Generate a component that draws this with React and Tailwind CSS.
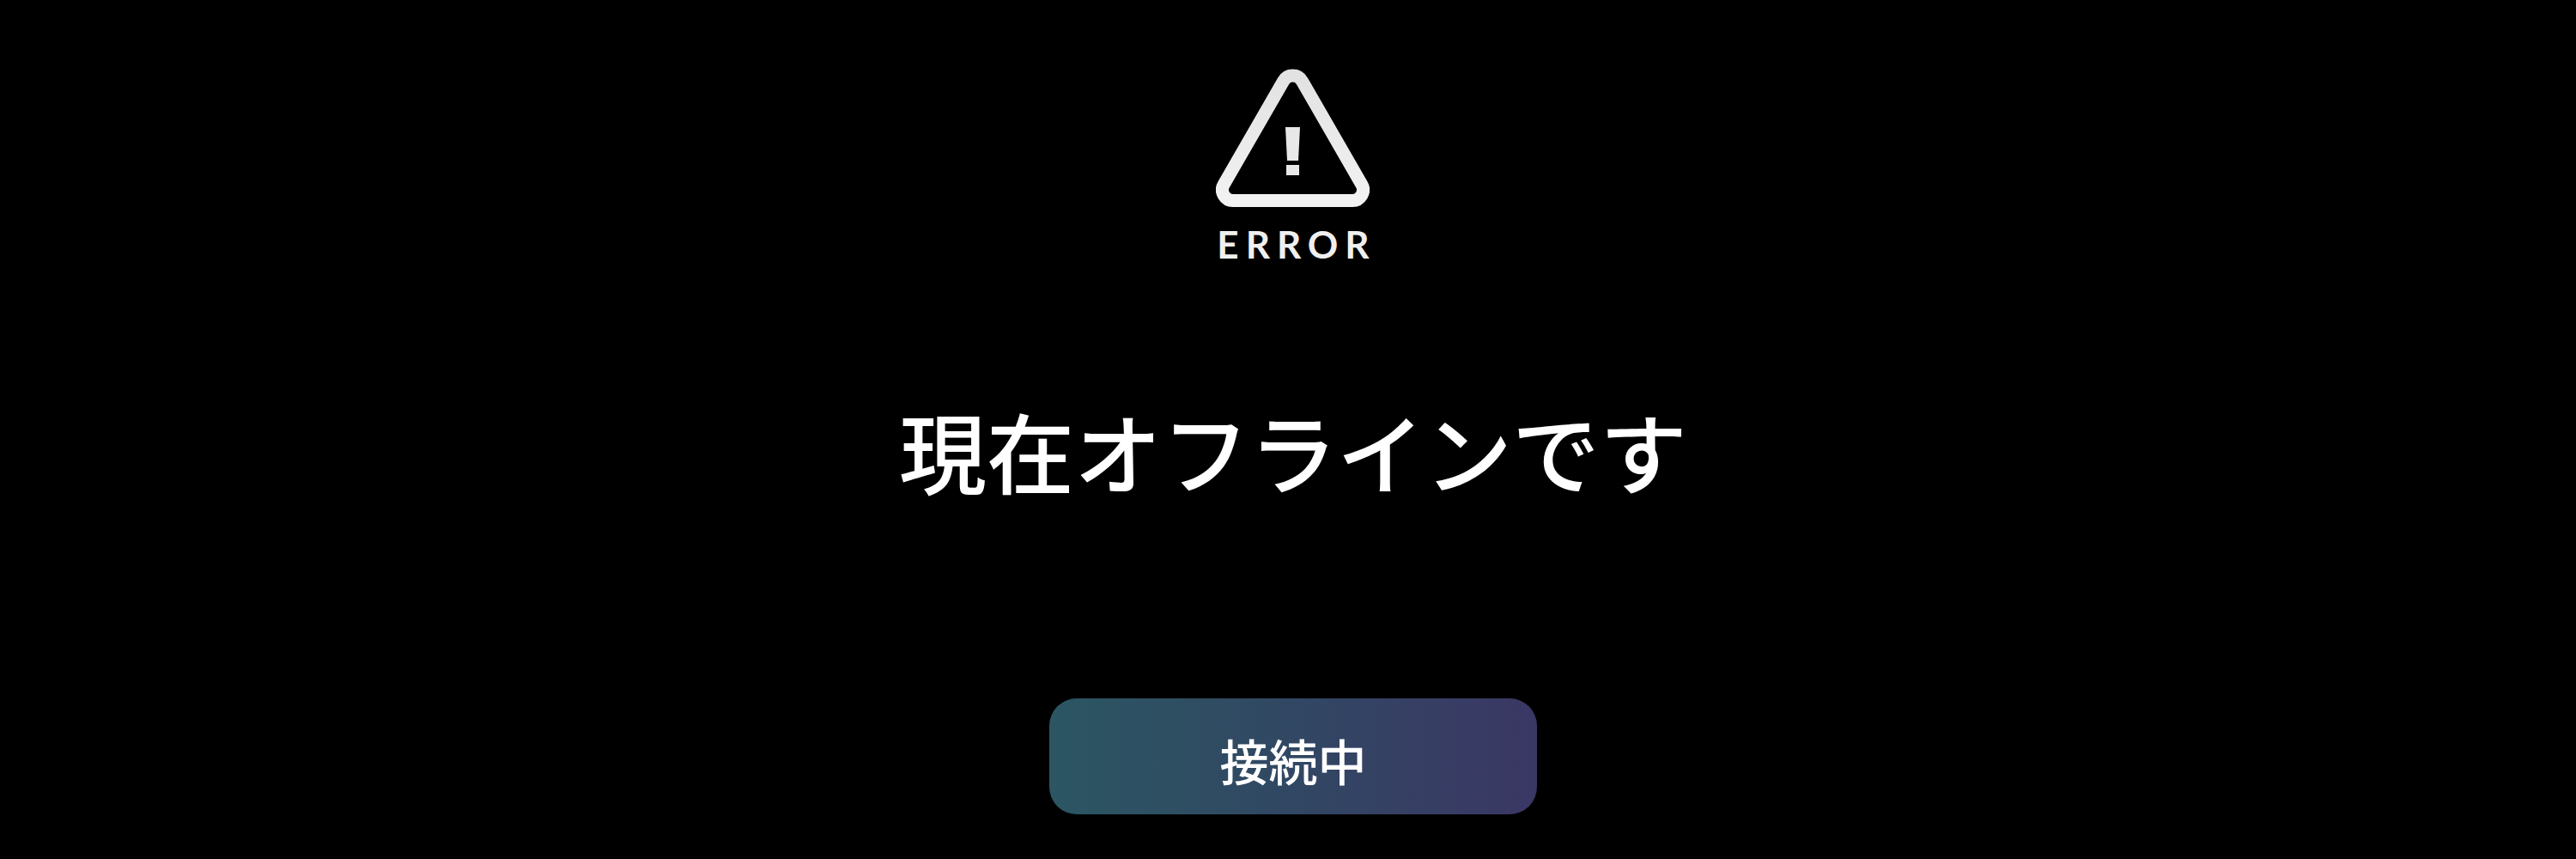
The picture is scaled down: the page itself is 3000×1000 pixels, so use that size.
const WarningIcon = () => (
  <svg
    viewBox="0 0 179 162"
    className="h-[162px] w-[179px]"
    fill="none"
    aria-hidden="true"
  >
    <defs>
      <linearGradient id="warning-shade" x1="0" y1="0" x2="0" y2="1">
        <stop offset="0" stopColor="#e2e2e2" />
        <stop offset="1" stopColor="#f2f2f2" />
      </linearGradient>
    </defs>
    <path
      d="M9.200 134.700 L78.700 14.200 A12.500 12.500 0 0 1 100.300 14.200 L169.800 134.700 A12.500 12.500 0 0 1 159 153.500 H20 A12.500 12.500 0 0 1 9.200 134.700 Z"
      stroke="url(#warning-shade)"
      strokeWidth="15"
    />
    <path d="M81 68h17l-2 39H83z" fill="#e8e8e8" />
    <path d="M82 112h15v12H82z" fill="#e8e8e8" />
  </svg>
);

const OfflineScreen = () => {
  return (
    <main className="flex min-h-screen flex-col items-center bg-black pt-20 pb-[52px] pl-3 font-['Noto_Sans_CJK_JP',sans-serif] text-white">
      {/* Error mark */}
      <div className="flex flex-col items-center">
        <WarningIcon />
        <p className="mt-[18px] pl-2 font-['Lato',sans-serif] text-[44px] leading-[48px] font-bold tracking-[8px] text-[#efefef]">
          ERROR
        </p>
      </div>

      <h1 className="mt-[140px] text-[102px] leading-[152px] font-medium">
        現在オフラインです
      </h1>

      {/* Connection status */}
      <button
        type="button"
        className="mt-auto h-[135px] w-[568px] rounded-[32px] bg-linear-to-r from-[#2b5662] via-[#314763] to-[#3a3764] pt-2 text-[57px] font-medium"
      >
        接続中
      </button>
    </main>
  );
};

export default function App() {
  return <OfflineScreen />;
}
